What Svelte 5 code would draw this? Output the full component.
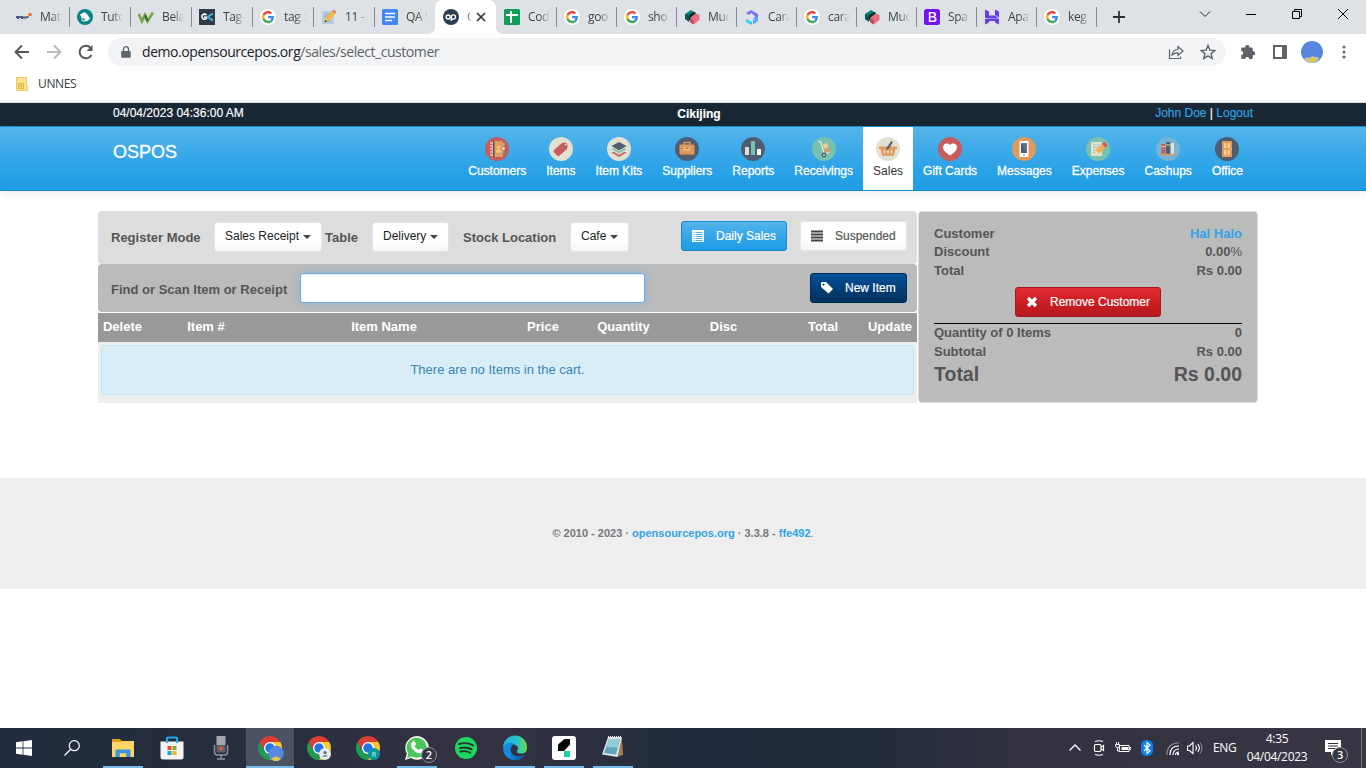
<script>
  const tabs = [
    { icon: 'maths', title: 'Mat' },
    { icon: 'tuto', title: 'Tuto', sep: true },
    { icon: 'w3', title: 'Bela', sep: true },
    { icon: 'gk', title: 'Tag-', sep: true },
    { icon: 'google', title: 'tag :', sep: true },
    { icon: 'memo', title: '11 -', sep: true },
    { icon: 'docs', title: 'QA V', sep: true },
    { icon: 'op', title: 'O', active: true },
    { icon: 'sheets', title: 'Cod', narrow: true },
    { icon: 'google', title: 'goo', sep: true, narrow: true },
    { icon: 'google', title: 'sho', sep: true, narrow: true },
    { icon: 'cubes', title: 'Mud', sep: true, narrow: true },
    { icon: 'swirl', title: 'Cara', sep: true, narrow: true },
    { icon: 'google', title: 'cara', sep: true, narrow: true },
    { icon: 'cubes', title: 'Mud', sep: true, narrow: true },
    { icon: 'boot', title: 'Spa', sep: true, narrow: true },
    { icon: 'host', title: 'Apa', sep: true, narrow: true },
    { icon: 'google', title: 'keg', sep: true, narrow: true }
  ];
  const modules = ['Customers', 'Items', 'Item Kits', 'Suppliers', 'Reports', 'Receivings', 'Sales', 'Gift Cards', 'Messages', 'Expenses', 'Cashups', 'Office'];
  const columns = ['Delete', 'Item #', 'Item Name', 'Price', 'Quantity', 'Disc', 'Total', 'Update'];
  const apps = [
    { icon: 'explorer', open: true },
    { icon: 'store' },
    { icon: 'mic' },
    { icon: 'chrome-main', open: true, current: true },
    { icon: 'chrome-guest' },
    { icon: 'chrome-r' },
    { icon: 'whatsapp', open: true },
    { icon: 'spotify' },
    { icon: 'edge', open: true },
    { icon: 'glints', open: true },
    { icon: 'notepad', open: true }
  ];
</script>

{#snippet favicon(name)}
  <svg class="fav" viewBox="0 0 16 16">
    {#if name === 'maths'}
      <path d="M0 8h1.500M2 7v3M3 8h2M6 7v3M7 8.500h2M10 7.500v2M11 8h1.500" stroke="#4c5c84" stroke-width="2" />
      <path d="M2 11h9" stroke="#ccd1da" /><circle cx="14" cy="5.500" r="1.800" fill="#ff6a13" />
    {:else if name === 'tuto'}
      <circle cx="8" cy="8" r="8" fill="#078385" />
      <path d="M3 5.500l4.500-2.500 2.500 2 3 4.500-2.500 2.500-3 .5V9L5 9.500z" fill="#fff" /><path d="M5 9.500v2l2.500 1" fill="none" stroke="#fff" />
    {:else if name === 'w3'}
      <path d="M.8 5l3.200 7L7 6l2.500 6L15 3.500" fill="none" stroke="#78a642" stroke-width="2.700" /><path d="M7 6l2.500 6" stroke="#3e7135" stroke-width="2.300" />
    {:else if name === 'gk'}
      <path fill="#303b46" d="M0 0h16v16H0z" /><path d="M7.500 6A2.600 2.600 0 1 0 8 8.500L5 8" fill="none" stroke="#fff" stroke-width="1.600" /><path d="M14 4.500L8.500 8l5.500 3.500" fill="none" stroke="#40b5e8" stroke-width="1.900" />
    {:else if name === 'google'}
      <circle cx="8" cy="8" r="8" fill="#fff" />
      <g transform="translate(1.900 1.900) scale(.255)">
        <path fill="#ea4335" d="M24 9.500c3.500 0 6.700 1.200 9.200 3.600l6.900-6.900C35.900 2.400 30.500 0 24 0 14.600 0 6.500 5.400 2.600 13.200l8 6.200C12.400 13.700 17.700 9.500 24 9.500z" />
        <path fill="#4285f4" d="M47 24.500c0-1.600-.2-3.100-.4-4.500H24v9h12.900c-.6 3-2.300 5.500-4.800 7.200l7.700 6C44.400 38 47 31.800 47 24.500z" />
        <path fill="#fbbc05" d="M10.500 28.600c-.5-1.500-.8-3-.8-4.600s.3-3.100.8-4.600l-8-6.200C.9 16.500 0 20.100 0 24s.9 7.500 2.600 10.800z" />
        <path fill="#34a853" d="M24 48c6.500 0 11.900-2.100 15.900-5.800l-7.700-6c-2.200 1.500-4.900 2.300-8.200 2.300-6.300 0-11.600-4.200-13.500-9.900l-8 6.200C6.500 42.600 14.600 48 24 48z" />
      </g>
    {:else if name === 'memo'}
      <path fill="#bdccda" d="M1 2h12v13H1z" /><path d="M3 5h6M3 7h4M3 9h3M3 12.500h7" stroke="#9db0c0" />
      <path d="M3.500 13.500L5 9l6-7 3.500 2.500L8 11.500z" fill="#f4b73b" /><path d="M11 2l1.500-1.500 3 2.500-1.500 1.500z" fill="#e9787b" /><path d="M3.500 13.500L4.300 11 6 12.500z" fill="#35444c" />
    {:else if name === 'docs'}
      <rect width="16" height="16" rx="1.500" fill="#4285f4" /><path d="M3 4.500h10M3 8h10M3 11.500h7" stroke="#fff" stroke-width="1.600" />
    {:else if name === 'op'}
      <circle cx="8" cy="8" r="8" fill="#2c3e50" /><circle cx="5.200" cy="8" r="2" fill="none" stroke="#fff" stroke-width="1.400" /><path d="M8.300 12V8a2.100 2.100 0 1 1 2.100 2.100q-1.300 0-2.100-1" fill="none" stroke="#fff" stroke-width="1.400" />
    {:else if name === 'sheets'}
      <rect width="16" height="16" rx="1.500" fill="#0f9d58" /><path d="M2 6h12M7 2v12" stroke="#fff" stroke-width="2" />
    {:else if name === 'cubes'}
      <path d="M1 5l6-4 5 3-5 8-6-2z" fill="#0a8275" /><path d="M1 5l4 2v6l-4-3z" fill="#005a54" /><path d="M5 6l5-3 2 1-5 4v4l-2-2z" fill="#17252b" /><path d="M6 9l6-4.500 3.500 1.500v5l-6 4.500L6 13z" fill="#e96f80" /><path d="M6 9l3.500 2v4.500L6 13z" fill="#c9435b" />
    {:else if name === 'swirl'}
      <path d="M2 4l5-3 7 4v7l-5 3v-3l2-2V7L7 4 5 6z" fill="#7774f4" /><path d="M10 8h4v4l-5 3v-3z" fill="#5ca7ff" /><path d="M2 10l6 3v3l-6-3z" fill="#22d5ef" />
    {:else if name === 'boot'}
      <rect width="16" height="16" rx="2.500" fill="#7411f5" /><path d="M4.800 3h4.400q2.900 0 2.900 2.500 0 1.800-1.500 2.200 2 .4 2 2.500 0 2.800-3.100 2.800H4.800zM6.400 4.500v2.700h2.300q1.600 0 1.600-1.400T8.900 4.500zm0 4v3h2.800q1.600 0 1.600-1.500T9.200 8.500z" fill="#fff" fill-rule="evenodd" />
    {:else if name === 'host'}
      <path d="M1 .5l4 2v4h6l3 2.500H1zM11 .5l4 2v6l-4-2.500zM1 15.500V10l4 0v3.500zM2 9.500h13v6l-4-2V12H5z" fill="#673de6" />
    {/if}
  </svg>
{/snippet}

{#snippet moduleIcon(name)}
  <svg class="mod" viewBox="0 0 24 24">
    {#if name === 'Customers'}
      <circle cx="12" cy="12" r="12" fill="#c55c5e" /><path d="M18 6h1.500v3H18z" fill="#7fc7b4" /><path d="M18 10h1.500v3H18z" fill="#fff" /><path d="M18 14h1.500v3H18z" fill="#4e9fc5" /><rect x="7" y="4" width="11" height="16" rx="1" fill="#e49b61" /><path d="M8 4h1.500v16H8z" fill="#5d4c55" /><path d="M5 6h3M5 9h3M5 12h3M5 15h3M5 18h3" stroke="#eee" /><circle cx="13.500" cy="10" r="1.800" fill="#f4c87c" /><path d="M11 15.500v-2q2.500-2 5 0v2z" fill="#f4c87c" />
    {:else if name === 'Items'}
      <circle cx="12" cy="12" r="12" fill="#e0e1d1" /><path d="M5 13l8-7q3-1 5 0 1 2 0 6l-8 7q-1 .5-2-.5L4.800 15q-.6-1 .2-2z" fill="#c55c5e" /><circle cx="16.700" cy="7.600" r="1" fill="#e0e1d1" />
    {:else if name === 'Item Kits'}
      <circle cx="12" cy="12" r="12" fill="#e0e1d1" /><path d="M4.500 15.500l7.500-3 7.500 3L12 20z" fill="#c55c5e" /><path d="M4.500 13.500l7.500-3 7.500 3L12 18z" fill="#e0e1d1" /><path d="M4.500 12l7.500-3 7.500 3-7.500 4.500z" fill="#76c2af" /><path d="M4.500 10l7.500-3 7.500 3-7.500 4.500z" fill="#e0e1d1" /><path d="M4.500 9L12 5l7.500 4-7.500 4.500z" fill="#4f5d73" />
    {:else if name === 'Suppliers'}
      <circle cx="12" cy="12" r="12" fill="#4f5d73" /><path d="M9 8V5.500h6V8" fill="none" stroke="#e0995e" stroke-width="1.400" /><rect x="4.500" y="7.500" width="15" height="10" rx="1" fill="#e0995e" /><path d="M5 11.500h14M5 17h14" stroke="#c98851" /><path d="M9.500 10v3h5v-3" fill="none" stroke="#f5cf87" stroke-width="1.200" />
    {:else if name === 'Reports'}
      <circle cx="12" cy="12" r="12" fill="#4f5d73" /><rect x="4" y="10" width="4" height="8" rx=".5" fill="#e0e1d1" /><rect x="10" y="4" width="4" height="14" rx=".5" fill="#76c2af" /><rect x="16" y="12" width="4" height="6" rx=".5" fill="#fff" />
    {:else if name === 'Receivings'}
      <circle cx="12" cy="12" r="12" fill="#76c2af" /><path d="M10.500 8l4-2.500 2 4.500-4 2z" fill="#f5cf87" /><path d="M12 12.500l4-2 2 4.500-4.500 2z" fill="#e0995e" /><path d="M6.500 4.500l2.200.5 3.500 12 5.300-2" stroke="#e7e7df" fill="none" stroke-width="1.300" /><circle cx="12" cy="18" r="1.700" fill="#e0e1d1" stroke="#4f5d73" stroke-width="1.400" />
    {:else if name === 'Sales'}
      <circle cx="12" cy="12" r="12" fill="#e0e1d1" /><path d="M3 9.500h18v2.200h-1.500l-1.700 7H6.200l-1.700-7H3z" fill="#e0995e" /><path d="M8.500 13.500v3M12 13.500v3M15.500 13.500v3" stroke="#f1e6d4" stroke-width="1.500" /><path d="M15.500 5.500l-4 6" stroke="#4f5d73" stroke-width="2.200" stroke-linecap="round" />
    {:else if name === 'Gift Cards'}
      <circle cx="12" cy="12" r="12" fill="#c75c5c" /><path d="M12 18.500C8 16 5 13.500 5 10.300 5 6.500 9.500 5.200 12 8c2.500-2.800 7-1.500 7 2.300 0 3.200-3 5.700-7 8.200z" fill="#fff" />
    {:else if name === 'Messages'}
      <circle cx="12" cy="12" r="12" fill="#e0995e" /><rect x="7.500" y="4" width="9" height="16" rx="1" fill="#fff" /><path d="M9 6h6v10H9z" fill="#4f5d73" /><path d="M15 6v10L9 6z" fill="#657188" /><circle cx="12" cy="18" r=".8" fill="#4f5d73" />
    {:else if name === 'Expenses'}
      <circle cx="12" cy="12" r="12" fill="#76c2af" /><path d="M5 5h11v14H5z" fill="#e0e1d1" /><path d="M7 8h7M7 10.500h6M7 13h3M7 15.500h2" stroke="#b9beb2" /><path d="M8.500 18l1.200-4.700L17 6l3.500 3.500-7.300 7.300z" fill="#f2ad58" /><path d="M16 7l2-2q2.500 0 3.500 3.500l-2 2z" fill="#c75c5c" /><path d="M8.500 18l1.200-4.700 3.500 3.500z" fill="#f5e2bf" />
    {:else if name === 'Cashups'}
      <circle cx="12" cy="12" r="12" fill="#77b3d4" /><path d="M5.500 7h3.700v10H5.500z" fill="#c75c5c" /><path d="M10 5h4v12h-4z" fill="#4f5d73" /><path d="M15 6h3v11h-3z" fill="#e0e1d1" /><path d="M5.500 9.500h3.700M10 8h4" stroke="#f5cf87" /><path d="M4.500 17.500h15" stroke="#e0995e" stroke-width="1.600" />
    {:else}
      <circle cx="12" cy="12" r="12" fill="#4f5d73" /><path d="M7 4h10v16H7z" fill="#e0995e" /><path d="M9 6h2.400v5H9zM12.600 6H15v5h-2.400zM9 13h2.400v5H9zM12.600 13H15v5h-2.400z" fill="#f5cf87" /><circle cx="15.500" cy="12" r=".9" fill="#f5cf87" />
    {/if}
  </svg>
{/snippet}

{#snippet chromeLogo()}
  <g transform="scale(.5)">
    <path fill="#dc3e34" d="M24 12H44.780A24 24 0 0 0 3.220 12L13.600 30 24 24z" />
    <path fill="#1f9a50" d="M3.220 12A24 24 0 0 0 24 48L34.400 30 24 24 13.600 30z" />
    <path fill="#fcc72f" d="M44.780 12A24 24 0 0 1 24 48L34.400 30 24 24V12z" />
    <circle cx="24" cy="24" r="12" fill="#fff" /><circle cx="24" cy="24" r="9.400" fill="#2275e8" />
  </g>
{/snippet}

{#snippet appIcon(name)}
  <svg class="appicon" viewBox="0 0 28 28">
    {#if name === 'explorer'}
      <path d="M3 5h8l2 2h11v16H3z" fill="#e2a018" /><path d="M3 8h9l1-1h12v16H3z" fill="#ffd567" /><path d="M6.500 23v-6.500q0-1 1-1h13q1 0 1 1V23h-4.300v-3.700h-6.400V23z" fill="#3994dc" />
    {:else if name === 'store'}
      <path d="M9 9V4.500q0-1 1-1h8q1 0 1 1V9" fill="none" stroke="#19a9e5" stroke-width="2.200" /><path d="M2.500 7.500h23V23q0 2.500-2.500 2.500H5Q2.500 25.500 2.500 23z" fill="#f3f3f5" /><path d="M9.500 12h4v4h-4z" fill="#e94f25" /><path d="M14.500 12h4v4h-4z" fill="#7bb819" /><path d="M9.500 17h4v4h-4z" fill="#19a2e5" /><path d="M14.500 17h4v4h-4z" fill="#fcb813" /><path d="M9 7.500V9M19 7.500V9" stroke="#19a9e5" stroke-width="2.200" />
    {:else if name === 'mic'}
      <path d="M9.500 2h9v9h-9z" fill="#a4a8ae" /><path d="M9.500 11h9v6q0 1.500-1.500 1.500h-6q-1.500 0-1.500-1.500z" fill="#59616b" /><circle cx="14" cy="14.500" r="2" fill="#ed5424" /><path d="M7.500 11v7q0 3 3 3h7q3 0 3-3v-7M14 21v4M10 25h8" fill="none" stroke="#8c949c" stroke-width="1.500" />
    {:else if name === 'chrome-main'}
      <g transform="translate(2 2)">{@render chromeLogo()}</g><circle cx="20" cy="19.500" r="7.800" fill="#5a87df" /><path d="M15.500 25q0-2 2.500-1.500 2-2.500 4 0 2-.5 2.500 1.500l-2.500 2h-4z" fill="#e0c84c" />
    {:else if name === 'chrome-guest'}
      <g transform="translate(2 2)">{@render chromeLogo()}</g><circle cx="20" cy="20" r="6" fill="#e8eaed" /><circle cx="20" cy="18.500" r="1.500" fill="#5f6368" /><path d="M17 22.500q3-3 6 0z" fill="#5f6368" />
    {:else if name === 'chrome-r'}
      <g transform="translate(2 2)">{@render chromeLogo()}</g><circle cx="20" cy="20" r="6" fill="#07979d" /><text x="20" y="22.500" text-anchor="middle" font-family="Roboto, sans-serif" font-size="7" fill="#b9eeee">R</text>
    {:else if name === 'whatsapp'}
      <path d="M2 26l1.800-6.300A11.800 11.800 0 1 1 8 24z" fill="#f4f7f5" /><path d="M4 24l1.300-4.700A10 10 0 1 1 9 22.600z" fill="#48c857" /><path d="M9 8q2-2 3 0l1 2.300-1.500 1.700q1 2.500 4 4l2-1.500 3 1.600q0 3-3 3.400-4 0-8-4.500Q6.500 10.500 9 8z" fill="#fff" />
    {:else if name === 'spotify'}
      <circle cx="14" cy="14" r="11" fill="#1fd760" /><path d="M7 10q8-2.200 14 1.400M8 14q6.500-1.500 11.700 1.400M8.500 17.500q5.500-1.200 9.700 1.200" fill="none" stroke="#23332d" stroke-width="1.900" stroke-linecap="round" />
    {:else if name === 'edge'}
      <defs><linearGradient id="edgeTop"><stop offset="0" stop-color="#1caee5" /><stop offset=".6" stop-color="#2ac4c4" /><stop offset="1" stop-color="#67d94a" /></linearGradient><linearGradient id="edgeLow"><stop offset="0" stop-color="#0f84db" /><stop offset="1" stop-color="#124a96" /></linearGradient></defs>
      <path d="M2 13A12 12 0 0 1 26 14q0 5.500-6 5.500-5 0-4-3 2-2.500 0-4.500Q10 7 2 13z" fill="url(#edgeTop)" /><path d="M2 13q5-6 12-3-5 2-4.500 7 1 7 9 6.500l5.500-2.500Q20 26 14 26 2 25 2 13z" fill="#148ae0" /><path d="M10 15q-1 8 9.500 7l4.500-1Q20 26 14 26 7 23 10 15z" fill="url(#edgeLow)" />
    {:else if name === 'glints'}
      <rect x="2" y="2" width="24" height="24" rx="3" fill="#fff" /><path d="M8 10.500L14.500 5H20v5.500L14 17H8z" fill="#050606" /><path d="M14 17h6v6h-6z" fill="#19d3a2" />
    {:else}
      <path d="M19 4l4 1 1 16-6 2z" fill="#a67a48" /><path d="M9 3h14l-4.500 20L3 20.500z" fill="#d7e4e7" /><path d="M10 5h11l-4 15.500-12-1.500z" fill="#5ba7bd" /><path d="M10 5h11l-2.200 8.500L7 13z" fill="#93cbd7" /><path d="M9 3h14" stroke="#eef2f0" stroke-dasharray="1" stroke-width="2" />
    {/if}
  </svg>
{/snippet}

<div class="screen">
  <div class="tabstrip">
    {#each tabs as tab}
      <div class="tab" class:narrow={tab.narrow} class:active={tab.active}>
        <i class="sep" class:on={tab.sep}></i>
        {@render favicon(tab.icon)}
        <span class="title">{tab.title}</span>
        {#if tab.active}
          <svg class="close" viewBox="0 0 10 10"><path d="M1 1l8 8M9 1L1 9" stroke="#303134" stroke-width="1.600" /></svg>
        {/if}
      </div>
    {/each}
    <i class="sep on"></i>
    <svg class="newtab" viewBox="0 0 12 12"><path d="M6 0v12M0 6h12" stroke="#303134" stroke-width="1.800" /></svg>
    <div class="winbtns">
      <svg viewBox="0 0 12 12"><path d="M1 3.500l5 5 5-5" fill="none" stroke="#222" /></svg>
      <svg viewBox="0 0 12 12"><path d="M1 6.500h10" stroke="#000" /></svg>
      <svg viewBox="0 0 12 12"><path d="M1.500 3.500h7v7h-7zM3.500 3V1.500h7v7H9" fill="none" stroke="#000" /></svg>
      <svg viewBox="0 0 12 12"><path d="M1 1l10 10M11 1L1 11" stroke="#000" /></svg>
    </div>
  </div>

  <div class="toolbar">
    <svg class="tb" viewBox="0 0 16 16"><path d="M15 8H2M8 1.500L1.500 8 8 14.500" fill="none" stroke="#54575b" stroke-width="1.900" /></svg>
    <svg class="tb" viewBox="0 0 16 16"><path d="M1 8h13M8 1.500L14.500 8 8 14.500" fill="none" stroke="#b8babd" stroke-width="1.900" /></svg>
    <svg class="tb" viewBox="0 0 16 16"><path d="M13.500 11A6.300 6.300 0 1 1 12.500 3.600" fill="none" stroke="#54575b" stroke-width="2" /><path d="M14.500 1v6h-6z" fill="#54575b" /></svg>
    <div class="omnibox">
      <svg class="lock" viewBox="0 0 10 12"><path d="M1 5h8q.700 0 .700.700V11q0 .8-.7.800H1q-.8 0-.8-.8V5.700Q.2 5 1 5z" fill="#5f6368" /><path d="M2.500 5V3.200a2.500 2.500 0 0 1 5 0V5" fill="none" stroke="#5f6368" stroke-width="1.300" /></svg>
      <span class="url"><b>demo.opensourcepos.org</b>/sales/select_customer</span>
      <svg class="share" viewBox="0 0 16 16"><path d="M1.500 5.500v9h11v-2M4 11q1-5.500 6-5.500v-3L15 7l-5 4.500V8.800q-3.500 0-6 2.200z" fill="none" stroke="#5f6368" stroke-width="1.200" /></svg>
      <svg class="star" viewBox="0 0 16 16"><path d="M8 1.500l1.900 4.600 4.900.4-3.800 3.200 1.200 4.800L8 11.900l-4.200 2.600L5 9.700 1.200 6.500l4.900-.4z" fill="none" stroke="#5f6368" stroke-width="1.400" /></svg>
    </div>
    <svg class="puzzle" viewBox="0 0 16 16"><path d="M2.500 3.500H5.300a2 2 0 1 1 3.900 0h2.300q1.300 0 1.300 1.300v2.500a2 2 0 1 1 0 3.900v2.500q0 1.300-1.300 1.300H9.300a2.100 2.100 0 0 0-4.200 0H2.500q-1.300 0-1.300-1.300v-2.500a2.100 2.100 0 0 0 0-4.200V4.800q0-1.300 1.300-1.300z" fill="#5f6368" /></svg>
    <svg class="panel" viewBox="0 0 14 14"><path d="M1 1h12v12H1z" fill="none" stroke="#5f6368" stroke-width="2" /><path d="M9 0h5v14H9z" fill="#5f6368" /></svg>
    <svg class="avatar" viewBox="0 0 22 22"><circle cx="11" cy="11" r="11" fill="#5686de" /><path d="M3 18q2-3 5-1 3-3 6-1 4-1 4 2-3 4-7 4-5 0-8-4z" fill="#c2c4a0" /><path d="M8 19q2-3 6-1l0 2-4 1z" fill="#edc91f" /></svg>
    <svg class="dots" viewBox="0 0 4 14"><circle cx="2" cy="2" r="1.500" fill="#5f6368" /><circle cx="2" cy="7" r="1.500" fill="#5f6368" /><circle cx="2" cy="12" r="1.500" fill="#5f6368" /></svg>
  </div>

  <div class="bookmarks">
    <svg viewBox="0 0 12 14"><path d="M.5.5h10v9h1v4H.500z" fill="#fde293" stroke="#f0cb55" /><path d="M2.500 6.500h5v5h-5zM5 6.500v5M2.500 9h5" fill="none" stroke="#e3b63a" /></svg>
    <span>UNNES</span>
  </div>

  <div class="topbar">
    <div class="wrap top">
      <span>04/04/2023 04:36:00 AM</span>
      <strong>Cikijing</strong>
      <span class="user"><a>John Doe</a> | <a>Logout</a></span>
    </div>
  </div>
  <nav class="navbar">
    <div class="wrap navrow">
      <span class="brand">OSPOS</span>
      <ul>
        {#each modules as m}
          <li class:current={m === 'Sales'}>{@render moduleIcon(m)}<span>{m}</span></li>
        {/each}
      </ul>
    </div>
  </nav>

  <main>
    <section class="register">
      <div class="mode">
        <label class="l1">Register Mode</label>
        <button class="sel s1">Sales Receipt<i></i></button>
        <label class="l2">Table</label>
        <button class="sel s2">Delivery<i></i></button>
        <label class="l3">Stock Location</label>
        <button class="sel s3">Cafe<i></i></button>
        <div class="right">
          <button class="btn blue"><svg viewBox="0 0 12 12"><path d="M0 0h12v12H0z" fill="#fff" /><path d="M1.500 2.500h1M3.500 2.500h7M1.500 4.500h1M3.500 4.500h7M1.500 6.500h1M3.500 6.500h7M1.500 8.500h1M3.500 8.500h7M1.500 10.500h1M3.500 10.500h7" fill="none" stroke="#3ba7e5" stroke-width=".9" /></svg><span>Daily Sales</span></button>
          <button class="btn white"><svg viewBox="0 0 12 12"><path d="M0 1.500h12M0 4.500h12M0 7.500h12M0 10.500h12" stroke="#444" stroke-width="1.900" /></svg><span>Suspended</span></button>
        </div>
      </div>
      <div class="find">
        <label>Find or Scan Item or Receipt</label>
        <input aria-label="Item" />
        <button class="btn navy"><svg viewBox="0 0 12 12"><path d="M0 1.500Q0 0 1.500 0H5l7 7-4.500 4.500L0 5zM2.500 1.500a1 1 0 1 0 .01 0z" fill="#fff" fill-rule="evenodd" /></svg><span>New Item</span></button>
      </div>
      <div class="thead">{#each columns as c}<span>{c}</span>{/each}</div>
      <div class="cart"><div class="alert">There are no Items in the cart.</div></div>
    </section>

    <aside class="overall">
      <div class="line"><span>Customer</span><a>Hal Halo</a></div>
      <div class="line"><span>Discount</span><span>0.00<em>%</em></span></div>
      <div class="line"><span>Total</span><span>Rs 0.00</span></div>
      <button class="btn red"><svg viewBox="0 0 12 12"><path d="M2 2l8 8M10 2l-8 8" stroke="#fff" stroke-width="3.400" /></svg><span>Remove Customer</span></button>
      <div class="sums">
        <div class="line"><span>Quantity of 0 Items</span><span>0</span></div>
        <div class="line"><span>Subtotal</span><span>Rs 0.00</span></div>
        <div class="line big"><span>Total</span><span>Rs 0.00</span></div>
      </div>
    </aside>
  </main>

  <footer>
    <p><b>© 2010 - 2023 · <a>opensourcepos.org</a> · 3.3.8 - <a>ffe492</a></b>.</p>
  </footer>

  <div class="taskbar">
    <div class="sys"><svg class="winlogo" viewBox="0 0 16 16"><path d="M0 2.200L6.600 1.300V7.600H0zM7.400 1.200L16 0v7.600H7.400zM0 8.400h6.600v6.300L0 13.800zM7.400 8.400H16V16l-8.600-1.200z" fill="#fff" /></svg></div>
    <div class="sys second"><svg class="winlogo" viewBox="0 0 16 16"><circle cx="10.300" cy="5.700" r="5" fill="none" stroke="#fff" stroke-width="1.200" /><path d="M6.500 9.500L.5 15.500" stroke="#fff" stroke-width="1.300" /></svg></div>
    {#each apps as app}
      <div class="app" class:open={app.open} class:focus={app.current}>
        {@render appIcon(app.icon)}
        {#if app.icon === 'whatsapp'}<span class="badge wa">2</span>{/if}
      </div>
    {/each}
    <div class="tray">
      <svg class="t1" viewBox="0 0 16 16"><path d="M2.500 10.500L8 5l5.500 5.500" fill="none" stroke="#fff" stroke-width="1.300" /></svg>
      <svg class="t2" viewBox="0 0 16 16"><rect x="3.500" y="4.500" width="6.500" height="7" rx="1.200" fill="none" stroke="#fff" stroke-width="1.200" /><path d="M10 7l2.500-1.500v5L10 9M4 1.500q4-1.500 8 0M4 14.500q4 1.500 8 0" fill="none" stroke="#fff" stroke-width="1.200" /></svg>
      <svg class="t3" viewBox="0 0 16 16"><path d="M4.500 5.500H14v6H4.500zM14.500 7.500H16v2h-1.500z" fill="none" stroke="#fff" /><path d="M6.500 7H13v3H6.500z" fill="#fff" /><path d="M1.500 2v2M3.500 2v2M.5 4.500h4V6q-.5 1.500-2 1.500T.5 6zM2.500 7.500v3.500H5" fill="#383542" stroke="#fff" /></svg>
      <svg class="t4" viewBox="0 0 16 16"><rect x="2" width="12" height="16" rx="5.500" fill="#0a7ff5" /><path d="M5 5l6 6-3 2.500v-11L11 5l-6 6" fill="none" stroke="#fff" stroke-width="1.200" /></svg>
      <svg class="t5" viewBox="0 0 16 16"><path d="M2 15Q2 3 14 3" fill="none" stroke="#8c8a93" stroke-width="1.200" /><path d="M5 15Q5 6 14 6M8 15q0-6 6-6M10.500 15q0-3 3.500-3" fill="none" stroke="#fff" stroke-width="1.200" /><circle cx="13" cy="14" r="1.200" fill="#fff" /></svg>
      <svg class="t6" viewBox="0 0 16 16"><path d="M.5 6v4.500h2l3.500 3V2.500L2.500 6zM8.500 5.500q2 2.500 0 5M10.800 4q3 4 0 8" fill="none" stroke="#fff" stroke-width="1.100" /><path d="M13 2.500q4 5.500 0 11" fill="none" stroke="#8e8b96" /></svg>
      <span class="lang">ENG</span>
      <span class="clock"><span>4:35</span><span>04/04/2023</span></span>
      <div class="note">
        <svg viewBox="0 0 16 16"><path d="M0 0h16v12H9l-3 3.500V12H0z" fill="#fff" /><path d="M3 3.500h10M3 6h10M3 8.500h7" stroke="#383542" /></svg>
        <span class="badge">3</span>
      </div>
      <i class="peek"></i>
    </div>
  </div>
</div>

<style>
  :global(body) { background: #fff; overflow: hidden; }
  .screen { width: 1366px; height: 768px; display: flex; flex-direction: column; overflow: hidden; font: 13px/1.4286 "Liberation Sans", Arial, sans-serif; color: #555; background: #fff; }
  .screen * { box-sizing: border-box; }
  svg { display: block; flex: none; }
  button, input { font: inherit; margin: 0; }

  .tabstrip { height: 34px; flex: none; background: #dee1e6; display: flex; align-items: center; padding-left: 8px; font: 12px/16px "Open Sans", "Noto Sans", sans-serif; color: #3f4247; }
  .tab { width: 61px; height: 34px; display: flex; align-items: center; flex: none; }
  .tab.narrow { width: 60px; }
  .sep { width: 1px; height: 20px; flex: none; }
  .sep.on { background: #84878c; }
  .fav { width: 16px; height: 16px; margin-left: 7px; }
  .title { width: 22px; margin-left: 8px; overflow: hidden; white-space: nowrap; flex: none; letter-spacing: -0.35px; -webkit-mask-image: linear-gradient(90deg, #000 50%, transparent); mask-image: linear-gradient(90deg, #000 50%, transparent); }
  .tab.active { background: #fff; border-radius: 8px 8px 0 0; position: relative; }
  .active::before, .active::after { content: ""; position: absolute; bottom: 0; width: 6px; height: 6px; background: radial-gradient(circle at 0 0, transparent 5.500px, #fff 6px); }
  .active::before { left: -6px; }
  .active::after { right: -6px; transform: scaleX(-1); }
  .active .title { width: 4px; color: #8a6ba0; }
  .close { width: 10px; height: 10px; margin-left: 5px; }
  .newtab { width: 12px; height: 12px; margin-left: 16px; }
  .winbtns { display: flex; gap: 34px; margin: -6px 17px 0 auto; }
  .winbtns svg { width: 12px; height: 12px; }

  .toolbar { height: 34px; flex: none; display: flex; align-items: center; padding: 2px 0 0 14px; }
  .tb { width: 16px; height: 16px; margin-right: 16px; }
  .omnibox { width: 1118px; height: 28px; margin-left: -2px; border-radius: 14px; background: #f1f3f4; display: flex; align-items: center; padding: 0 10px 0 13px; }
  .lock { width: 10px; height: 12px; }
  .url { font: 14px/20px "Open Sans", "Noto Sans", sans-serif; color: #5f6368; margin-left: 11px; letter-spacing: -0.44px; flex: 1; }
  .url b { font-weight: 400; color: #202124; }
  .share { width: 16px; height: 16px; }
  .star { width: 16px; height: 16px; margin-left: 16px; }
  .puzzle { width: 16px; height: 16px; margin-left: 14px; }
  .panel { width: 14px; height: 14px; margin-left: 17px; }
  .avatar { width: 22px; height: 22px; margin-left: 14px; }
  .dots { width: 4px; height: 14px; margin-left: 19px; }
  .bookmarks { height: 35px; flex: none; border-bottom: 1px solid #dcdee1; display: flex; align-items: center; padding: 0 0 3px 16px; font: 12px/16px "Open Sans", "Noto Sans", sans-serif; color: #3c4043; letter-spacing: -0.35px; }
  .bookmarks svg { width: 12px; height: 14px; margin-right: 10px; }

  .wrap { width: 1140px; margin-left: 113px; display: flex; }
  .topbar { height: 23px; flex: none; background: #1a2734; color: #fff; font-size: 12px; line-height: 20px; }
  .top { display: grid; grid-template-columns: 1fr 200px 1fr; margin-left: 113px; -webkit-text-stroke: .15px; }
  .top strong { text-align: center; position: relative; left: 16px; top: 1px; }
  .user { text-align: right; }
  .topbar a { color: #2fa4e7; }
  .navbar { height: 65px; flex: none; border: solid #178acc; border-width: 1px 0; background: linear-gradient(#54b4eb, #2fa4e7 60%, #1d9ce5); box-shadow: 0 1px 10px rgba(0, 0, 0, .1); }
  .navrow { height: 63px; justify-content: space-between; }
  .brand { color: #fff; font-size: 18px; line-height: 50px; text-shadow: 0 1px 0 rgba(0, 0, 0, .1); -webkit-text-stroke: .35px; }
  ul { display: flex; list-style: none; margin: 0; padding: 0; }
  li { height: 63px; padding: 10px 10px 0; display: flex; flex-direction: column; align-items: center; color: #fff; font-size: 12px; line-height: 18px; text-shadow: 0 1px 0 rgba(0, 0, 0, .1); white-space: nowrap; -webkit-text-stroke: .3px; }
  .mod { width: 24px; height: 24px; margin-bottom: 1px; }
  .current { background: #fff; color: #333; text-shadow: none; -webkit-text-stroke: 0; }

  main { display: flex; gap: 1px; padding: 20px 0 0 98px; height: 287px; flex: none; align-items: flex-start; }
  .register { width: 819px; }
  label { font-weight: 700; white-space: nowrap; flex: none; }
  .mode { height: 53px; background: #ddd; border-radius: 4px; display: flex; align-items: center; padding: 0 10px 0 13px; }
  .mode label { padding-top: 2px; }
  .l1 { width: 103px; } .l2 { width: 47px; margin-left: 3px; } .l3 { width: 107px; margin-left: 14px; }
  .sel { height: 30px; margin-top: -1px; background: linear-gradient(#fff 60%, #f5f5f5); border: 1px solid #dce6ee; border-radius: 3px; padding: 0 10px; font-size: 12px; color: #222; display: flex; align-items: center; justify-content: space-between; white-space: nowrap; }
  .sel i { border: 4px solid transparent; border-top-color: #444; border-bottom: 0; }
  .s1 { width: 108px; } .s2 { width: 77px; } .s3 { width: 59px; }
  .right { display: flex; gap: 13px; margin: -3px 0 0 auto; }
  .btn { height: 30px; border-radius: 3px; border: 1px solid; display: flex; align-items: center; font-size: 12px; padding: 0 10px; color: #fff; white-space: nowrap; }
  .btn svg { width: 12px; height: 12px; margin: -1px 12px 0 0; }
  .btn span { padding-top: 1px; -webkit-text-stroke: .2px; }
  .blue { width: 106px; background: linear-gradient(#54b4eb, #2fa4e7 60%, #1d9ce5); border-color: #178acc; }
  .white { width: 107px; background: linear-gradient(#fff 60%, #f5f5f5); border-color: #e5e7e8; color: #555; }
  .navy { width: 97px; margin-left: auto; background: linear-gradient(#04519b, #033c73 60%, #02325f); border-color: #022f5a; }
  .find { height: 48px; margin-top: 0; background: #bbb; border-radius: 4px; display: flex; align-items: center; padding: 0 10px 0 13px; }
  .find label { width: 189px; padding-top: 5px; }
  .find input { width: 345px; height: 30px; border: 1px solid #66afe9; border-radius: 3px; background: #fff; padding: 0 10px; outline: none; box-shadow: inset 0 1px 1px rgba(0, 0, 0, .075), 0 0 8px rgba(102, 175, 233, .6); }
  .thead { height: 29px; margin-top: 1px; background: #999; color: #fff; font-weight: 700; display: grid; grid-template-columns: 49px 118px 238px 80px 81px 119px 80px 54px; line-height: 28px; text-align: center; }
  .cart { background: #eee; height: 61px; padding: 3px 3px 0; }
  .alert { height: 50px; border: 1px solid #bce8f1; border-radius: 4px; background: #d9edf7; color: #3a87ad; text-align: center; line-height: 47px; padding-right: 20px; }

  .overall { width: 340px; height: 192px; background: #bbb; border: 1px solid #ddd; border-radius: 4px; padding: 12.500px 15px 0; display: flex; flex-direction: column; font-weight: 700; }
  .line { display: flex; justify-content: space-between; height: 18.570px; line-height: 18.570px; }
  .line a { color: #2fa4e7; }
  .line em { font-style: normal; font-weight: 400; }
  .red { width: 146px; align-self: center; margin: 7px 0 5.800px; background: linear-gradient(#e12b31, #c71c22 60%, #b5191f); border-color: #a3161b; font-weight: 400; }
  .sums { border-top: 1px solid #000; }
  .big { font-size: 19.500px; height: 27px; line-height: 27px; }

  footer { height: 111px; flex: none; background: #eee; color: #777; font-size: 11px; text-align: center; }
  footer p { margin: 0; line-height: 111px; }
  footer a { color: #2fa4e7; }

  .taskbar { height: 40px; flex: none; margin-top: auto; display: flex; background: linear-gradient(90deg, #202d3e 0, #252d3d 12%, #2b2f3f 25%, #343242 33%, #2d3040 43%, #1f2b3c 50%, #202b3b 62%, #32313f 75%, #393643); color: #fff; }
  .sys { width: 48px; display: flex; align-items: center; justify-content: center; }
  .second { width: 50px; padding-right: 2px; }
  .winlogo { width: 16px; height: 16px; }
  .app { width: 49px; display: flex; justify-content: center; padding-top: 6px; position: relative; flex: none; }
  .appicon { width: 28px; height: 28px; }
  .app.open { background: linear-gradient(#76b9ed, #76b9ed) center bottom / 40px 2px no-repeat; }
  .app.focus { background: linear-gradient(#76b9ed, #76b9ed) center bottom / 48px 2px no-repeat, linear-gradient(#4b5261, #4b5261) center / 48px 40px no-repeat; }
  .badge { position: absolute; width: 16px; height: 16px; border: 1px solid #8c8d92; border-radius: 8px; background: #353641; font: 600 11px/14px "Open Sans", "Noto Sans", sans-serif; text-align: center; color: #fff; }
  .wa { left: 29px; top: 19px; }
  .tray { margin-left: auto; display: flex; align-items: center; font: 12px/18px "Open Sans", "Noto Sans", sans-serif; letter-spacing: -0.3px; }
  .tray svg { width: 16px; height: 16px; margin-right: 8px; }
  .tray .t4 { margin-right: 10px; }
  .tray .t5 { margin-right: 6px; }
  .tray .t6 { margin-right: 10px; }
  .lang { width: 24px; }
  .clock { width: 60px; margin-left: 10px; display: flex; flex-direction: column; text-align: center; white-space: nowrap; align-items: center; }
  .note { margin-left: 18px; width: 36px; position: relative; }
  .note .badge { left: 7px; top: 7px; }
  .peek { width: 1px; height: 40px; background: #77747e; margin-right: 4px; }
</style>
